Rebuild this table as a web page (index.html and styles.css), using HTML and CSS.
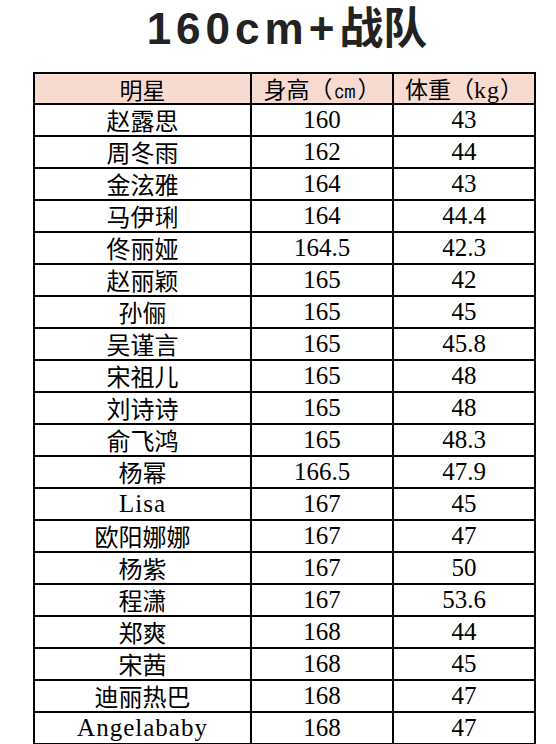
FILE: index.html
```html
<!DOCTYPE html>
<html lang="zh">
<head>
<meta charset="utf-8">
<title>160cm+战队</title>
<link rel="stylesheet" href="styles.css">
</head>
<body>
<h1 class="title"><span class="title-latin">160cm+</span><span class="title-cjk">战队</span></h1>
<table class="stars">
  <colgroup>
    <col class="c-name">
    <col class="c-height">
    <col class="c-weight">
  </colgroup>
  <thead>
    <tr class="head">
      <th>明星</th>
      <th>身高（<span class="unit">㎝</span>）</th>
      <th>体重（<span class="unit">kg</span>）</th>
    </tr>
  </thead>
  <tbody>
    <tr><td>赵露思</td><td>160</td><td>43</td></tr>
    <tr><td>周冬雨</td><td>162</td><td>44</td></tr>
    <tr><td>金泫雅</td><td>164</td><td>43</td></tr>
    <tr><td>马伊琍</td><td>164</td><td>44.4</td></tr>
    <tr><td>佟丽娅</td><td>164.5</td><td>42.3</td></tr>
    <tr><td>赵丽颖</td><td>165</td><td>42</td></tr>
    <tr><td>孙俪</td><td>165</td><td>45</td></tr>
    <tr><td>吴谨言</td><td>165</td><td>45.8</td></tr>
    <tr><td>宋祖儿</td><td>165</td><td>48</td></tr>
    <tr><td>刘诗诗</td><td>165</td><td>48</td></tr>
    <tr><td>俞飞鸿</td><td>165</td><td>48.3</td></tr>
    <tr><td>杨幂</td><td>166.5</td><td>47.9</td></tr>
    <tr><td class="latin">Lisa</td><td>167</td><td>45</td></tr>
    <tr><td>欧阳娜娜</td><td>167</td><td>47</td></tr>
    <tr><td>杨紫</td><td>167</td><td>50</td></tr>
    <tr><td>程潇</td><td>167</td><td>53.6</td></tr>
    <tr><td>郑爽</td><td>168</td><td>44</td></tr>
    <tr><td>宋茜</td><td>168</td><td>45</td></tr>
    <tr><td>迪丽热巴</td><td>168</td><td>47</td></tr>
    <tr><td class="latin">Angelababy</td><td>168</td><td>47</td></tr>
    <tr><td>&nbsp;</td><td>&nbsp;</td><td>&nbsp;</td></tr>
  </tbody>
</table>
</body>
</html>
```
FILE: styles.css
```css
html, body {
  margin: 0;
  padding: 0;
  background: #ffffff;
}

body {
  width: 556px;
  height: 744px;
  overflow: hidden;
}

.title {
  margin: 0;
  padding-left: 18px;
  height: 72px;
  box-sizing: border-box;
  text-align: center;
  font-size: 44px;
  line-height: 50px;
  font-weight: bold;
  color: #222222;
  font-family: "Liberation Sans", "Noto Sans CJK SC", sans-serif;
}

.title-latin {
  letter-spacing: 5px;
}

.title-cjk {
  font-family: "Noto Sans CJK SC", sans-serif;
  font-weight: bold;
  line-height: 50px;
}

.stars {
  margin-left: 33px;
  border-collapse: collapse;
  table-layout: fixed;
  width: 501px;
  color: #000000;
  font-family: "Liberation Serif", "Noto Sans CJK SC", serif;
  font-size: 25px;
}

.c-name { width: 217px; }
.c-height { width: 142px; }
.c-weight { width: 142px; }

.stars th,
.stars td {
  border: 2px solid #000000;
  padding: 0;
  text-align: center;
  vertical-align: middle;
  white-space: nowrap;
  line-height: 24px;
}

.stars th {
  font-weight: normal;
  font-family: "Noto Sans CJK SC", sans-serif;
  font-size: 23px;
}

.stars th .unit {
  font-family: "Liberation Serif", serif;
  font-size: 24px;
  letter-spacing: 1px;
}

.stars td:first-child {
  font-family: "Noto Sans CJK SC", sans-serif;
  font-size: 24px;
}

.stars td.latin {
  font-family: "Liberation Serif", serif;
  font-size: 25px;
  letter-spacing: 1px;
}

.head {
  height: 31px;
  background: #f8dbd0;
}

.stars tbody tr {
  height: 32px;
}
```
